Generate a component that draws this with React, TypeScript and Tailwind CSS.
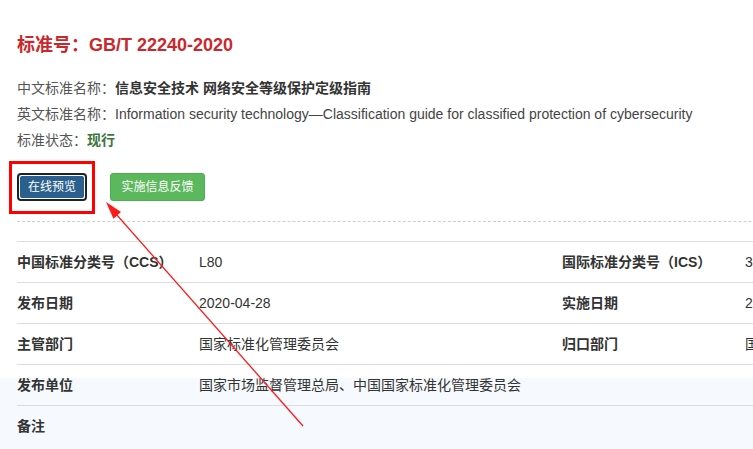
const FONT = "font-['Liberation_Sans','Noto_Sans_CJK_SC',sans-serif]";

type Row = { label: string; value: string; label2?: string; value2?: string };

const ROWS: Row[] = [
  { label: "中国标准分类号（CCS）", value: "L80", label2: "国际标准分类号（ICS）", value2: "35.030" },
  { label: "发布日期", value: "2020-04-28", label2: "实施日期", value2: "2020-11-01" },
  { label: "主管部门", value: "国家标准化管理委员会", label2: "归口部门", value2: "国家标准化管理委员会" },
  { label: "发布单位", value: "国家市场监督管理总局、中国国家标准化管理委员会" },
  { label: "备注", value: "" },
];

function Arrow() {
  return (
    <svg className="pointer-events-none absolute left-0 top-0" width="753" height="449" viewBox="0 0 753 449">
      <line x1="303" y1="426" x2="116" y2="214" stroke="#ff1a1a" strokeWidth="1.3" />
      <polygon points="106,202 121,212 113.5,218.8" fill="#ff1a1a" />
    </svg>
  );
}

export default function App() {
  return (
    <div
      className={`relative h-[449px] w-[753px] overflow-hidden bg-[linear-gradient(to_bottom,#ffffff_378px,#f6fafe_378px)] pl-[17px] pt-[33px] text-[#333] ${FONT}`}
    >
      <h1 className="text-[18px] font-bold leading-[24px] text-[#c9282d]">标准号：GB/T 22240-2020</h1>

      <div className="mt-[18px] text-[14px] leading-[26px] text-[#555]">
        <p className="whitespace-nowrap">
          中文标准名称：<span className="font-bold text-[#333]">信息安全技术 网络安全等级保护定级指南</span>
        </p>
        <p className="whitespace-nowrap">
          英文标准名称：
          <span className="text-[#444]">
            Information security technology—Classification guide for classified protection of cybersecurity
          </span>
        </p>
        <p>
          标准状态：<span className="font-bold text-[#3c763d]">现行</span>
        </p>
      </div>

      <div className="relative mt-[20px] flex h-[28px] items-center gap-[23px]">
        <button className="flex h-[28px] w-[70px] items-center justify-center rounded-[4px] border-2 border-[#18232e] bg-white p-px">
          <span className="flex h-full w-full items-center justify-center rounded-[2px] bg-[#2b5f8e] text-[12px] text-white">
            在线预览
          </span>
        </button>
        <button className="flex h-[28px] w-[95px] items-center justify-center rounded-[3px] border border-[#4cae4c] bg-[#5cb85c] text-[12px] text-white">
          实施信息反馈
        </button>
        <div className="absolute left-[-8px] top-[-12px] h-[53px] w-[86px] border-[3px] border-[#ff0000]" />
      </div>

      <div className="mt-[20px] w-[1000px] border-t border-dashed border-[#cfcfcf]" />

      <div className="mt-[19px] w-[1000px] text-[14px]">
        {ROWS.map((r) => (
          <div key={r.label} className="flex h-[41px] items-center border-t border-[#dddddd]">
            <div className="w-[182px] shrink-0 font-bold">{r.label}</div>
            <div className="w-[363px] shrink-0 whitespace-nowrap">{r.value}</div>
            {r.label2 && <div className="w-[183px] shrink-0 font-bold">{r.label2}</div>}
            {r.value2 && <div className="whitespace-nowrap">{r.value2}</div>}
          </div>
        ))}
      </div>

      <Arrow />
    </div>
  );
}
